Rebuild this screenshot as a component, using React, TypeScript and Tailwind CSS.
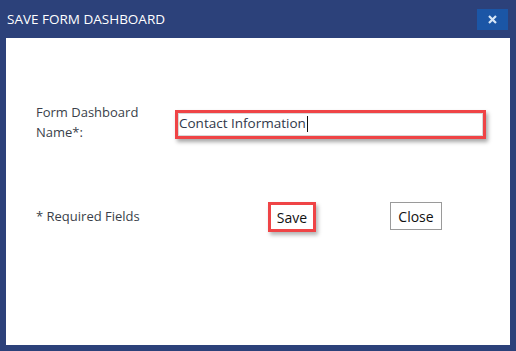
import React from "react";

export default function App() {
  return (
    <div
      className="w-[516px] h-[351px] bg-[#2c417a] flex flex-col px-[6px] pb-[6px]"
      style={{ fontFamily: '"Open Sans", "Noto Sans", sans-serif' }}
    >
      <div className="h-[38px] flex items-center justify-between pl-[1px]">
        <span className="text-[13.5px] text-white mt-[1px]">SAVE FORM DASHBOARD</span>
        <div className="w-[31px] h-[21px] bg-[#1b56a6] flex items-center justify-center mr-[2px] self-start mt-[9px]">
          <svg width="9" height="9" viewBox="0 0 9 9">
            <path d="M1 1 L8 8 M8 1 L1 8" stroke="#d6e6f7" strokeWidth="2.2" />
          </svg>
        </div>
      </div>
      <div className="flex-1 bg-white flex flex-col">
        <div className="flex items-center mt-[64px] pl-[30px]">
          <div className="w-[139px] text-[13px] leading-[20px] text-[#3a3f4a]">
            Form Dashboard
            <br />
            Name*:
          </div>
          <div className="w-[311px] h-[29px] border-[3px] border-[#ef4446] shadow-[2px_3px_4px_rgba(0,0,0,0.35)] flex items-center mt-[4px]">
            <div className="flex-1 h-full border border-[#d8d8d8] flex items-center">
              <span className="text-[13.5px] text-[#30384a] leading-none">Contact Information</span>
              <span className="w-[1px] h-[16px] bg-[#111] ml-[1px]"></span>
            </div>
          </div>
        </div>
        <div className="flex items-center mt-[60px] pl-[30px]">
          <div className="w-[232px] text-[13px] text-[#3a3f4a]">* Required Fields</div>
          <div className="w-[48px] h-[30px] border-[3px] border-[#ef4446] shadow-[2px_3px_4px_rgba(0,0,0,0.3)] flex items-center justify-center">
            <span className="text-[14px] text-[#111]">Save</span>
          </div>
          <div className="ml-[74px] w-[52px] h-[28px] border border-[#9a9a9a] flex items-center justify-center -mt-[2px]">
            <span className="text-[14px] text-[#111]">Close</span>
          </div>
        </div>
      </div>
    </div>
  );
}
